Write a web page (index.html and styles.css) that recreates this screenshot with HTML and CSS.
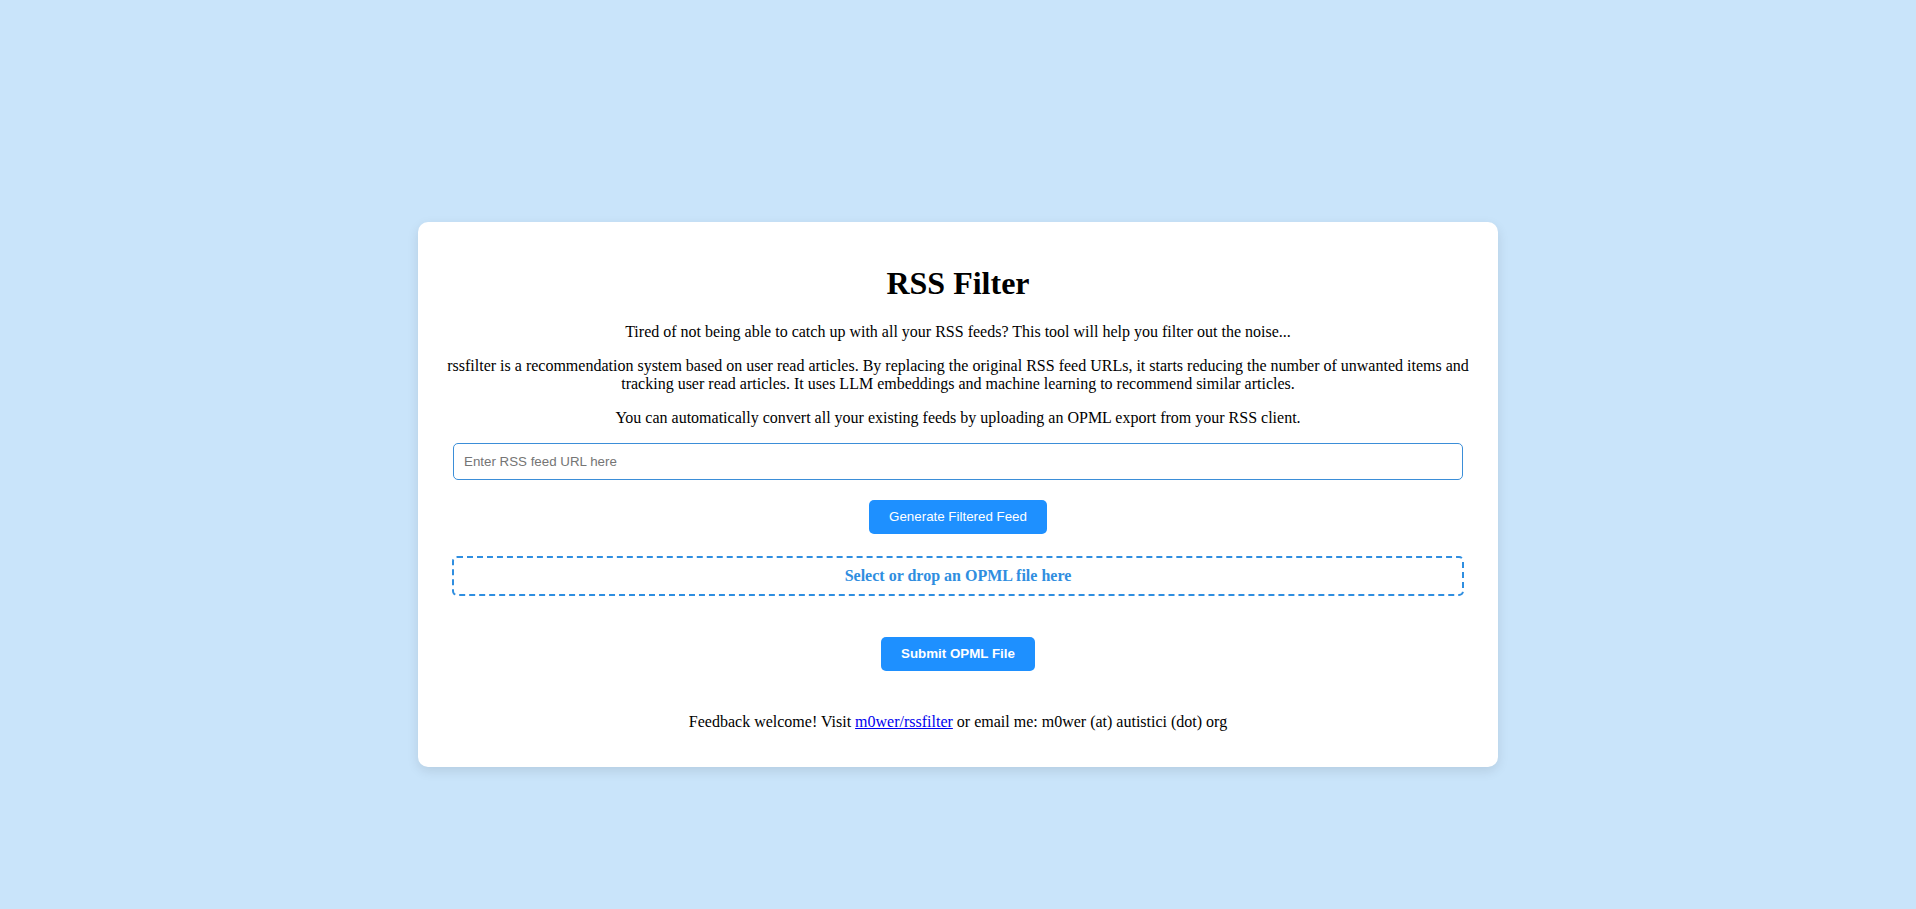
FILE: index.html
```html
<!DOCTYPE html>
<html lang="en">
<head>
<meta charset="UTF-8">
<meta name="viewport" content="width=device-width, initial-scale=1.0">
<title>RSS Filter</title>
<link rel="stylesheet" href="styles.css">
</head>
<body>
<div class="container">
  <h1>RSS Filter</h1>
  <p>Tired of not being able to catch up with all your RSS feeds? This tool will help you filter out the noise...</p>
  <p>rssfilter is a recommendation system based on user read articles. By replacing the original RSS feed URLs, it starts reducing the number of unwanted items and tracking user read articles. It uses LLM embeddings and machine learning to recommend similar articles.</p>
  <p>You can automatically convert all your existing feeds by uploading an OPML export from your RSS client.</p>

  <form id="feedForm" class="feed-form">
    <input type="text" id="feedUrl" class="url-input" placeholder="Enter RSS feed URL here">
    <button type="submit" class="btn">Generate Filtered Feed</button>
  </form>

  <form id="opmlForm" class="opml-form">
    <label for="opmlFile" class="drop-zone">Select or drop an OPML file here</label>
    <input type="file" id="opmlFile" accept=".opml,.xml" hidden>
    <button type="submit" class="btn btn-bold">Submit OPML File</button>
  </form>

  <p class="footer">Feedback welcome! Visit <a href="#">m0wer/rssfilter</a> or email me: m0wer (at) autistici (dot) org</p>
</div>
</body>
</html>
```

FILE: styles.css
```css
body {
  font-family: "Liberation Serif", "Times New Roman", serif;
  font-size: 16px;
  background-color: #c9e4fa;
  margin: 0;
  padding: 0;
  min-height: 100vh;
}

.container {
  width: 1080px;
  box-sizing: border-box;
  margin: 222px auto 0;
  padding: 22px 20px 20px;
  background-color: #fff;
  border-radius: 10px;
  box-shadow: 0 4px 12px rgba(0, 0, 0, 0.1);
  text-align: center;
}

h1 {
  font-size: 32px;
  margin: 21px 0;
}

p {
  margin: 16px 0;
}

.feed-form,
.opml-form {
  margin: 0;
}

.url-input {
  display: block;
  width: calc(100% - 30px);
  margin: 0 auto;
  padding: 10px;
  box-sizing: border-box;
  font-family: "Liberation Sans", Arial, sans-serif;
  font-size: 13.33px;
  border: 1px solid #3b8ed8;
  border-radius: 5px;
  outline: none;
}

.url-input::placeholder {
  color: #757575;
}

.btn {
  display: block;
  margin: 20px auto 0;
  padding: 9px 20px 10px;
  font-family: "Liberation Sans", Arial, sans-serif;
  font-size: 13.33px;
  color: #fff;
  background-color: #1e90ff;
  border: none;
  border-radius: 5px;
  cursor: pointer;
}

.btn-bold {
  font-weight: bold;
  margin-top: 41px;
}

.drop-zone {
  display: block;
  width: calc(100% - 28px);
  margin: 22px auto 0;
  padding: 9px 0;
  box-sizing: border-box;
  border: 2px dashed #2f8ee0;
  border-radius: 5px;
  color: #2f8ee0;
  font-weight: bold;
  cursor: pointer;
}

.footer {
  margin-top: 42px;
}

.footer a {
  color: #0000ee;
}
```
